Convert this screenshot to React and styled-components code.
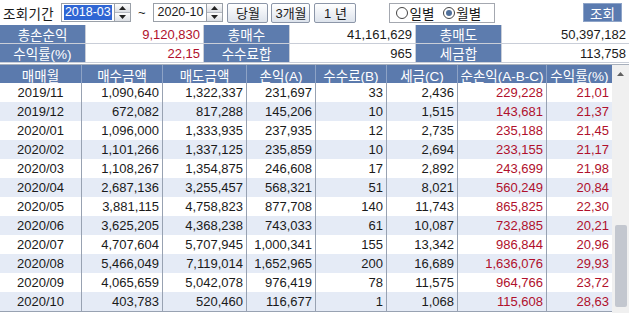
import React from "react";
import styled, { createGlobalStyle } from "styled-components";

const Global = createGlobalStyle`
  html, body { margin: 0; padding: 0; background: #fff; }
  body {
    width: 629px; height: 313px; overflow: hidden;
    font-family: "Liberation Sans", "Noto Sans CJK KR", sans-serif;
    font-size: 13px; color: #1a1a1a;
  }
`;

const Page = styled.div`
  width: 629px;
  display: flex;
  flex-direction: column;
`;

const Toolbar = styled.div`
  height: 25px;
  display: flex;
  align-items: center;
  padding-left: 3px;
  box-sizing: border-box;
  white-space: nowrap;
`;

const Label = styled.span`
  font-size: 13.5px;
  margin-right: 7px;
  letter-spacing: 0.3px;
`;

const DateBox = styled.div`
  display: flex;
  align-items: stretch;
  height: 19px;
`;

const DateInput = styled.div`
  width: 53px;
  border: 1px solid #9aa0a8;
  border-right: none;
  display: flex;
  align-items: center;
  padding-left: 2px;
  box-sizing: border-box;
  font-size: 12.5px;
  background: #fff;
  white-space: nowrap;
  overflow: hidden;
`;

const Selected = styled.span`
  background: ${p => (p.$on ? "#2f66d4" : "transparent")};
  color: ${p => (p.$on ? "#fff" : "#1a1a1a")};
  padding: 0 1px;
  line-height: 15px;
`;

const Spinner = styled.div`
  width: 17px;
  display: flex;
  flex-direction: column;
  border: 1px solid #9aa0a8;
  box-sizing: border-box;
`;

const SpinBtn = styled.div`
  flex: 1;
  background: linear-gradient(#fdfdfd, #dcdfe4);
  border-top: ${p => (p.$down ? "1px solid #b4b8c0" : "none")};
  display: flex;
  align-items: center;
  justify-content: center;
`;

const Tilde = styled.span`
  margin: 0 8px 0 7px;
  font-size: 13px;
`;

const Button = styled.div`
  height: 20px;
  width: ${p => p.$w}px;
  margin-left: ${p => p.$ml}px;
  box-sizing: border-box;
  border: 1px solid #8c96a8;
  border-radius: 2px;
  background: linear-gradient(#ffffff, #dde3ec);
  display: flex;
  align-items: center;
  justify-content: center;
  font-size: 13px;
`;

const RadioGroup = styled.div`
  margin-left: 33px;
  height: 20px;
  width: 106px;
  border: 1px solid #a4a8b0;
  box-sizing: border-box;
  display: flex;
  align-items: center;
  padding-left: 6px;
  gap: 9px;
`;

const RadioItem = styled.span`
  display: flex;
  align-items: center;
  gap: 1px;
  font-size: 13.5px;
`;

const RadioCircle = styled.span`
  width: 10px;
  height: 10px;
  border-radius: 50%;
  border: 1px solid #444;
  display: flex;
  align-items: center;
  justify-content: center;
  &::after {
    content: "";
    width: 6px;
    height: 6px;
    border-radius: 50%;
    background: ${p => (p.$on ? "#4f6f9a" : "transparent")};
  }
`;

const SearchBtn = styled.div`
  margin-left: auto;
  margin-right: 7px;
  width: 39px;
  height: 19px;
  background: #5b7bb0;
  border: 1px solid #8ea4c8;
  box-sizing: border-box;
  color: #fff;
  display: flex;
  align-items: center;
  justify-content: center;
  font-size: 13.5px;
`;

const Summary = styled.div`
  display: grid;
  grid-template-columns: 85px 117px 85px 125px 85px 127px;
  grid-auto-rows: 18px;
  gap: 1px;
  background: #c9ced8;
  border-bottom: 1px solid #c9ced8;
`;

const SumLabel = styled.div`
  background: #5d7cae;
  color: #fff;
  display: flex;
  align-items: center;
  justify-content: center;
  font-size: 13.5px;
`;

const SumValue = styled.div`
  background: #fff;
  display: flex;
  align-items: center;
  justify-content: flex-end;
  padding-right: 3px;
  color: ${p => (p.$red ? "#b0102c" : "#1a1a1a")};
`;

const TableArea = styled.div`
  display: flex;
  margin-top: 1px;
  border-top: 1px solid #a8b0bc;
`;

const Table = styled.div`
  width: 612px;
  display: flex;
  flex-direction: column;
`;

const cols = "82px 81px 84px 69px 71px 71px 89px 65px";

const HeadRow = styled.div`
  display: grid;
  grid-template-columns: ${cols};
  height: 18px;
  background: #5b7aad;
`;

const HeadCell = styled.div`
  color: #fff;
  display: flex;
  align-items: center;
  justify-content: center;
  font-size: 13.5px;
  border-right: 1px solid #8ea3c6;
  &:last-child { border-right: none; }
`;

const Row = styled.div`
  display: grid;
  grid-template-columns: ${cols};
  height: 19px;
  background: ${p => (p.$alt ? "#e5ebf6" : "#fff")};
`;

const Cell = styled.div`
  display: flex;
  align-items: center;
  justify-content: ${p => (p.$center ? "center" : "flex-end")};
  padding-right: ${p => (p.$center ? 0 : 3)}px;
  border-right: 1px solid #98a2b2;
  color: ${p => (p.$red ? "#b0102c" : "#1a1a1a")};
  font-size: 13px;
  &:last-child { border-right: none; }
`;

const TableBottom = styled.div`
  height: 1px;
  background: #98a2b2;
`;

const Scroll = styled.div`
  width: 17px;
  height: 262px;
  background: #f0f0f0;
  display: flex;
  flex-direction: column;
  align-items: center;
`;

const Arrow = styled.div`
  height: 18px;
  display: flex;
  align-items: center;
  justify-content: center;
`;

const Track = styled.div`
  flex: 1;
  display: flex;
  flex-direction: column;
  align-items: center;
`;

const Thumb = styled.div`
  width: 12px;
  height: 82px;
  margin-top: 142px;
  background: #c3c7cf;
  border-radius: 2px;
`;

const Tri = ({ down, color = "#222", w = 7, h = 4 }) => (
  <svg width={w} height={h} viewBox={`0 0 ${w} ${h}`}>
    {down ? (
      <polygon points={`0,0 ${w},0 ${w / 2},${h}`} fill={color} />
    ) : (
      <polygon points={`0,${h} ${w},${h} ${w / 2},0`} fill={color} />
    )}
  </svg>
);

const SpinnerCtl = () => (
  <Spinner>
    <SpinBtn><Tri /></SpinBtn>
    <SpinBtn $down><Tri down /></SpinBtn>
  </Spinner>
);

const headers = ["매매월", "매수금액", "매도금액", "손익(A)", "수수료(B)", "세금(C)", "순손익(A-B-C)", "수익률(%)"];

const data = [
  ["2019/11", "1,090,640", "1,322,337", "231,697", "33", "2,436", "229,228", "21,01"],
  ["2019/12", "672,082", "817,288", "145,206", "10", "1,515", "143,681", "21,37"],
  ["2020/01", "1,096,000", "1,333,935", "237,935", "12", "2,735", "235,188", "21,45"],
  ["2020/02", "1,101,266", "1,337,125", "235,859", "10", "2,694", "233,155", "21,17"],
  ["2020/03", "1,108,267", "1,354,875", "246,608", "17", "2,892", "243,699", "21,98"],
  ["2020/04", "2,687,136", "3,255,457", "568,321", "51", "8,021", "560,249", "20,84"],
  ["2020/05", "3,881,115", "4,758,823", "877,708", "140", "11,743", "865,825", "22,30"],
  ["2020/06", "3,625,205", "4,368,238", "743,033", "61", "10,087", "732,885", "20,21"],
  ["2020/07", "4,707,604", "5,707,945", "1,000,341", "155", "13,342", "986,844", "20,96"],
  ["2020/08", "5,466,049", "7,119,014", "1,652,965", "200", "16,689", "1,636,076", "29,93"],
  ["2020/09", "4,065,659", "5,042,078", "976,419", "78", "11,575", "964,766", "23,72"],
  ["2020/10", "403,783", "520,460", "116,677", "1", "1,068", "115,608", "28,63"],
];

export default function App() {
  return (
    <Page>
      <Global />
      <Toolbar>
        <Label>조회기간</Label>
        <DateBox>
          <DateInput><Selected $on>2018-03</Selected></DateInput>
          <SpinnerCtl />
        </DateBox>
        <Tilde>~</Tilde>
        <DateBox>
          <DateInput><Selected>2020-10</Selected></DateInput>
          <SpinnerCtl />
        </DateBox>
        <Button $w={41} $ml={4}>당월</Button>
        <Button $w={39} $ml={3}>3개월</Button>
        <Button $w={42} $ml={4}>1 년</Button>
        <RadioGroup>
          <RadioItem><RadioCircle />일별</RadioItem>
          <RadioItem><RadioCircle $on />월별</RadioItem>
        </RadioGroup>
        <SearchBtn>조회</SearchBtn>
      </Toolbar>
      <Summary>
        <SumLabel>총손순익</SumLabel>
        <SumValue $red>9,120,830</SumValue>
        <SumLabel>총매수</SumLabel>
        <SumValue>41,161,629</SumValue>
        <SumLabel>총매도</SumLabel>
        <SumValue>50,397,182</SumValue>
        <SumLabel>수익률(%)</SumLabel>
        <SumValue $red>22,15</SumValue>
        <SumLabel>수수료합</SumLabel>
        <SumValue>965</SumValue>
        <SumLabel>세금합</SumLabel>
        <SumValue>113,758</SumValue>
      </Summary>
      <TableArea>
        <Table>
          <HeadRow>
            {headers.map(h => <HeadCell key={h}>{h}</HeadCell>)}
          </HeadRow>
          {data.map((r, i) => (
            <Row key={r[0]} $alt={i % 2 === 1}>
              {r.map((v, j) => (
                <Cell key={j} $center={j === 0} $red={j >= 6}>{v}</Cell>
              ))}
            </Row>
          ))}
          <TableBottom />
        </Table>
        <Scroll>
          <Arrow><Tri color="#606060" w={7} h={4} /></Arrow>
          <Track><Thumb /></Track>
          <Arrow><Tri down color="#606060" w={7} h={4} /></Arrow>
        </Scroll>
      </TableArea>
    </Page>
  );
}
